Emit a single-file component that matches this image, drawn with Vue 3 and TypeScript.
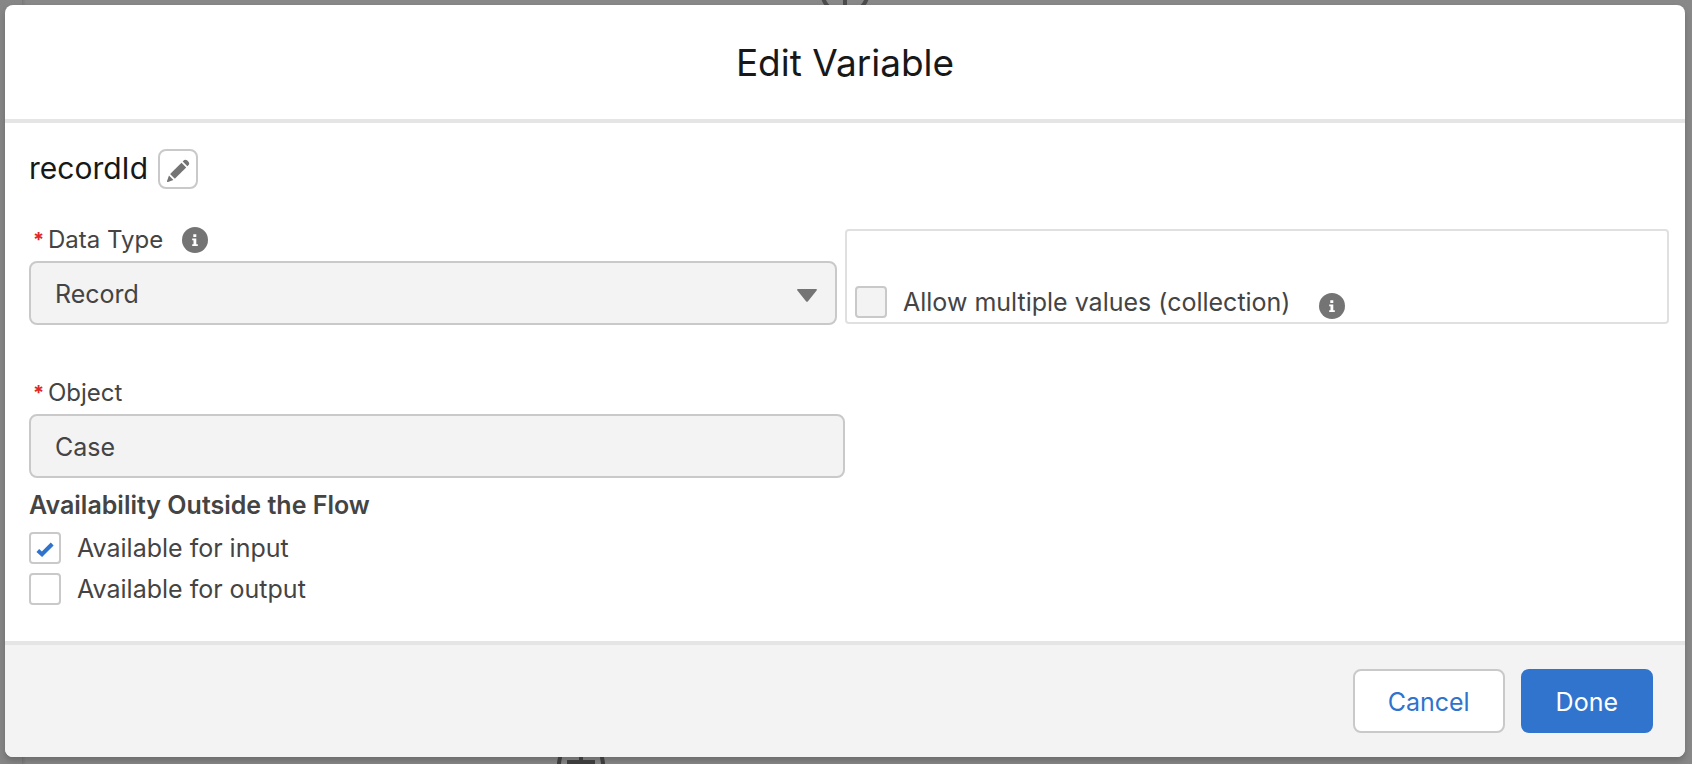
<script setup lang="ts">
import { ref } from 'vue'

const dataType = ref('Record')
const dataTypes = ['Record', 'Text', 'Number', 'Boolean']
const objectName = ref('Case')
const allowMultiple = ref(false)
const availability = ref([
  { id: 'available-input', label: 'Available for input', checked: true },
  { id: 'available-output', label: 'Available for output', checked: false },
])
</script>

<template>
  <div class="backdrop">
    <svg class="canvas-top" viewBox="0 0 60 5" aria-hidden="true">
      <circle cx="30" cy="-9" r="23" />
      <path d="M30 0V5" />
    </svg>
    <svg class="canvas-bottom" viewBox="0 0 48 7" aria-hidden="true">
      <path d="M2 7C2 4 3 2 3 0M46 7C46 4 45 2 45 0M24 0V7M10 5H38" />
    </svg>

    <section class="modal" role="dialog" aria-labelledby="modal-title">
      <header class="modal-header">
        <h1 id="modal-title">Edit Variable</h1>
      </header>

      <form id="variable-form" class="modal-body" @submit.prevent>
        <div class="name-row">
          <h2>recordId</h2>
          <button type="button" class="edit-button" aria-label="Edit API name">
            <svg viewBox="0 0 24 24" aria-hidden="true">
              <path d="M4.6 14.6 15.5 3.7 20.2 8.4 9.3 19.3Q8.8 19.7 8.3 19.3L4.6 15.6Q4.2 15.1 4.6 14.6Z" />
              <path d="M16.7 2.6 18.2 1.1Q19.6 .2 21 1.3L22.7 3Q23.8 4.4 22.8 5.8L21.4 7.2Z" />
              <path d="M3 16.6 7.4 21 2 23Q.6 23.3 1 21.9Z" />
            </svg>
          </button>
        </div>

        <div class="type-row">
          <div class="type-field">
            <div class="label-row">
              <span class="required" aria-hidden="true">*</span>
              <label for="data-type">Data Type</label>
              <button type="button" class="info-button" aria-label="Data type help">
                <svg viewBox="0 0 26 26" aria-hidden="true">
                  <circle cx="13" cy="13" r="13" />
                  <path d="M11.3 7.2H14.3V10H11.3ZM10.2 11.5H14.3V17.2H15.8V19H10.2V17.2H11.5V13.3H10.2Z" />
                </svg>
              </button>
            </div>
            <div class="select-wrap">
              <select id="data-type" v-model="dataType" class="control">
                <option v-for="type in dataTypes" :key="type">{{ type }}</option>
              </select>
              <svg class="caret" viewBox="0 0 20 13" aria-hidden="true">
                <path d="M.8 0H19.2Q20.4 .4 19.6 1.4L10.8 12.4Q10 13.2 9.2 12.4L.4 1.4Q-.4 .4 .8 0Z" />
              </svg>
            </div>
          </div>

          <div class="multiple-box">
            <label class="check-row" for="allow-multiple">
              <input id="allow-multiple" v-model="allowMultiple" type="checkbox" class="muted" />
              <span>Allow multiple values (collection)</span>
            </label>
            <button type="button" class="info-button lowered" aria-label="Collection help">
              <svg viewBox="0 0 26 26" aria-hidden="true">
                <circle cx="13" cy="13" r="13" />
                <path d="M11.3 7.2H14.3V10H11.3ZM10.2 11.5H14.3V17.2H15.8V19H10.2V17.2H11.5V13.3H10.2Z" />
              </svg>
            </button>
          </div>
        </div>

        <div class="object-field">
          <div class="label-row">
            <span class="required" aria-hidden="true">*</span>
            <label for="object-name">Object</label>
          </div>
          <input id="object-name" v-model="objectName" type="text" class="control" readonly />
        </div>

        <fieldset class="availability">
          <legend>Availability Outside the Flow</legend>
          <label v-for="option in availability" :key="option.id" class="check-row" :for="option.id">
            <input :id="option.id" v-model="option.checked" type="checkbox" />
            <svg v-if="option.checked" class="tick" viewBox="0 0 32 32" aria-hidden="true">
              <path d="M8.8 18.4 13 22.2 23.2 12" />
            </svg>
            <span>{{ option.label }}</span>
          </label>
        </fieldset>
      </form>

      <footer class="modal-footer">
        <button type="button" class="action">Cancel</button>
        <button type="submit" form="variable-form" class="action primary">Done</button>
      </footer>
    </section>
  </div>
</template>

<style>
body {
  margin: 0;
}
</style>

<style scoped>
.backdrop,
.backdrop * {
  box-sizing: border-box;
}

.backdrop {
  position: relative;
  display: flex;
  min-height: 100vh;
  padding: 5px 7px 7px 5px;
  overflow: hidden;
  background: linear-gradient(90deg, #868686 22px, #7a7a7a 22px, #888 26px);
  color: #444;
  font-family: Inter, "Noto Sans", sans-serif;
  font-size: 25px;
}

.canvas-top,
.canvas-bottom {
  position: absolute;
  fill: none;
  stroke: #4c4c4c;
  stroke-width: 4px;
}

.canvas-top {
  top: 0;
  left: calc(50% - 31px);
  width: 60px;
  height: 5px;
}

.canvas-bottom {
  z-index: 1;
  bottom: 0;
  left: 557px;
  width: 48px;
  height: 7px;
  stroke: #3c3c3c;
}

.modal {
  position: relative;
  display: flex;
  flex: 1;
  flex-direction: column;
  border-radius: 8px;
  background: #fff;
  box-shadow: 0 4px 6px rgba(0, 0, 0, 0.2);
}

.modal-header {
  display: flex;
  align-items: center;
  justify-content: center;
  height: 118px;
  border-bottom: 4px solid #e5e5e5;
}

h1,
h2 {
  margin: 0;
  color: #181818;
  font-weight: 400;
}

h1 {
  padding-top: 2px;
  font-size: 37px;
  line-height: 46px;
}

h2 {
  font-size: 30px;
  line-height: 38px;
  padding-bottom: 2px;
}

button {
  padding: 0;
  font: inherit;
  cursor: pointer;
}

.modal-body {
  flex: 1;
  padding: 26px 24px 36px;
}

.name-row {
  display: flex;
  align-items: center;
  gap: 10px;
  margin-bottom: 38px;
}

.edit-button {
  display: flex;
  align-items: center;
  justify-content: center;
  width: 40px;
  height: 40px;
  border: 2px solid #c9c9c9;
  border-radius: 8px;
  background: #fff;
}

.edit-button svg {
  width: 24px;
  height: 24px;
  margin-top: 4px;
  fill: #747474;
}

.type-row {
  display: grid;
  grid-template-columns: 1fr 1fr;
}

.type-field {
  padding-right: 8px;
}

.label-row {
  display: flex;
  align-items: center;
  height: 26px;
  margin-bottom: 8px;
  padding-left: 4px;
  font-size: 24px;
  line-height: 26px;
}

.required {
  width: 15px;
  color: #e02828;
  font-size: 20px;
  font-weight: 700;
}

.info-button {
  width: 26px;
  height: 26px;
  margin-left: 19px;
  border: 0;
  border-radius: 50%;
  background: none;
}

.info-button svg {
  display: block;
  fill: #747474;
}

.info-button path {
  fill: #fff;
}

.lowered {
  margin-top: 8px;
  margin-left: 28px;
}

.select-wrap {
  position: relative;
}

.control {
  display: block;
  width: 100%;
  height: 64px;
  margin: 0;
  padding: 2px 24px 0;
  border: 2px solid #c9c9c9;
  border-radius: 8px;
  outline: 0;
  appearance: none;
  background: #f3f3f3;
  color: #444;
  font: inherit;
}

.caret {
  position: absolute;
  top: 28px;
  right: 20px;
  width: 20px;
  height: 13px;
  fill: #747474;
  pointer-events: none;
}

.multiple-box {
  display: flex;
  align-items: center;
  margin: 2px -8px 1px 0;
  padding: 51px 8px 0;
  border: 2px solid #e0e0e0;
  border-radius: 4px;
}

.check-row {
  position: relative;
  display: flex;
  align-items: center;
  gap: 16px;
  line-height: 32px;
}

.check-row input {
  flex: none;
  width: 32px;
  height: 32px;
  margin: 0;
  border: 2px solid #c9c9c9;
  border-radius: 4px;
  appearance: none;
  background: #fff;
}

.check-row .muted {
  background: #f3f3f3;
}

.tick {
  position: absolute;
  left: 0;
  width: 32px;
  height: 32px;
  fill: none;
  stroke: #2f73cd;
  stroke-width: 4px;
  pointer-events: none;
}

.object-field {
  width: 50%;
  margin-top: 55px;
}

.availability {
  display: flex;
  flex-direction: column;
  align-items: flex-start;
  gap: 9px;
  margin: 14px 0 0;
  padding: 0;
  border: 0;
}

legend {
  margin-bottom: 14px;
  padding: 0;
  font-size: 25px;
  font-weight: 600;
  line-height: 26px;
}

.modal-footer {
  display: flex;
  justify-content: flex-end;
  gap: 16px;
  padding: 24px 32px;
  border-top: 4px solid #e5e5e5;
  border-radius: 0 0 8px 8px;
  background: #f3f3f3;
}

.action {
  height: 64px;
  padding: 2px 33px 0;
  border: 2px solid #c9c9c9;
  border-radius: 8px;
  background: #fff;
  color: #2f73cd;
}

.primary {
  border-color: #3174cd;
  background: #3174cd;
  color: #fff;
}
</style>
